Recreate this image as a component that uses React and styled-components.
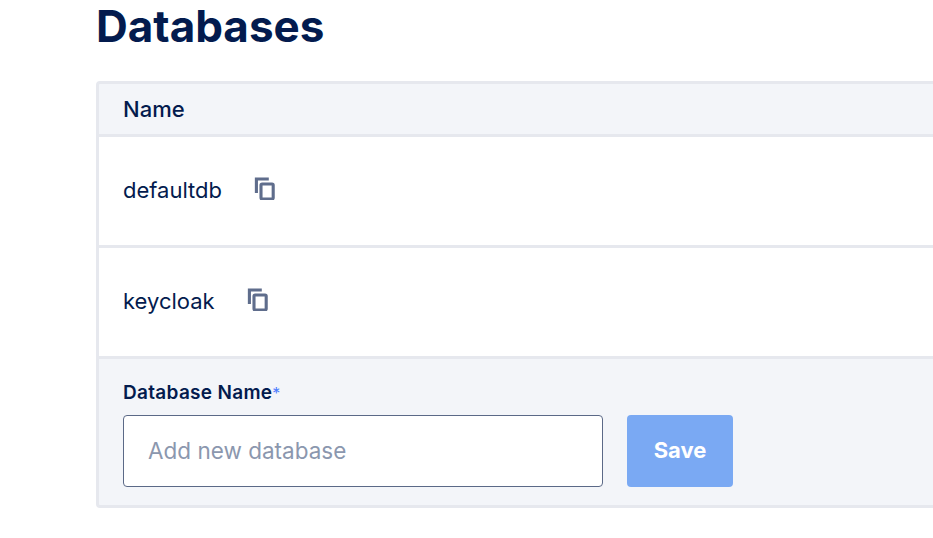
import React from "react";
import styled, { createGlobalStyle } from "styled-components";

const Global = createGlobalStyle`
  html, body { margin: 0; padding: 0; background: #fff; overflow: hidden; }
  body { font-family: "Inter", "Liberation Sans", sans-serif; color: #031b4e; }
`;
const Page = styled.div`
  width: 933px; height: 538px; overflow: hidden; box-sizing: border-box; padding-left: 96px;
`;
const Title = styled.h1`
  margin: 0; height: 81px; font-size: 44px; line-height: 53px; font-weight: 700; color: #031b4e;
`;
const Card = styled.div`
  width: 900px; box-sizing: border-box; border: 3px solid #e6e8ee; border-radius: 4px; background: #f3f5f9;
`;
const HeaderRow = styled.div`
  height: 53px; box-sizing: border-box; border-bottom: 3px solid #e6e8ee; padding-left: 24px;
  display: flex; align-items: center; font-size: 22px; font-weight: 500; color: #031b4e;
`;
const Row = styled.div`
  height: 111px; box-sizing: border-box; background: #fff; border-bottom: 3px solid #e6e8ee; padding: 0 0 3px 24px;
  display: flex; align-items: center; gap: 32px; font-size: 22px; color: #031b4e;
`;
const CopyBtn = styled.span`
  display: inline-flex; width: 24px; height: 24px; color: #5f6d8c; margin-top: -3px;
`;
const Form = styled.div`
  height: 146px; box-sizing: border-box; padding: 22px 0 0 24px;
`;
const Label = styled.label`
  display: block; font-size: 19px; letter-spacing: 0.3px; line-height: 23px; font-weight: 600; color: #031b4e; margin-bottom: 11px;
  & > span { color: #4d7cfe; font-weight: 400; font-size: 16px; line-height: 0; }
`;
const Controls = styled.div`
  display: flex; gap: 24px;
`;
const Input = styled.input`
  width: 480px; height: 72px; box-sizing: border-box; border: 1px solid #5b6987; border-radius: 4px; background: #fff;
  padding: 0 24px 2px; font: 400 22.5px "Inter", sans-serif; color: #031b4e;
  &::placeholder { color: #8b97ae; opacity: 1; }
`;
const Save = styled.button`
  width: 106px; height: 72px; border: 0; border-radius: 4px; background: #7aa9f3; color: #fff; padding: 0 0 2px;
  font: 700 22px "Inter", sans-serif;
`;

const CopyIcon = () => (
  <svg width="24" height="24" viewBox="0 0 24 24" fill="none" stroke="currentColor" strokeWidth="3.1">
    <path d="M2.4 17V3H14.8" />
    <rect x="7" y="8" width="12.2" height="15" rx="1.2" />
  </svg>
);

export default function App() {
  return (
    <Page>
      <Global />
      <Title>Databases</Title>
      <Card>
        <HeaderRow>Name</HeaderRow>
        <Row>defaultdb<CopyBtn><CopyIcon /></CopyBtn></Row>
        <Row>keycloak<CopyBtn><CopyIcon /></CopyBtn></Row>
        <Form>
          <Label>Database Name<span>*</span></Label>
          <Controls>
            <Input placeholder="Add new database" />
            <Save>Save</Save>
          </Controls>
        </Form>
      </Card>
    </Page>
  );
}
